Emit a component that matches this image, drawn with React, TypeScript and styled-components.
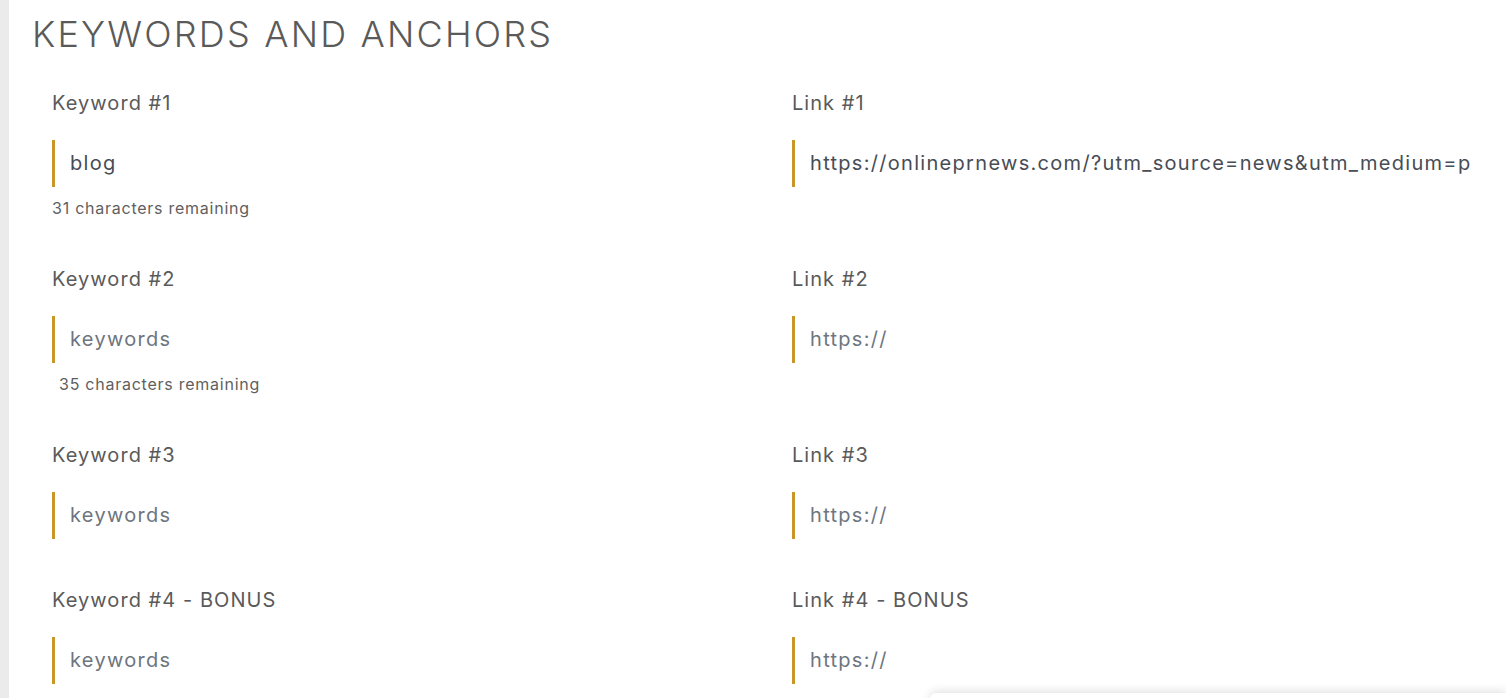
import React from "react";
import styled, { createGlobalStyle } from "styled-components";

const GlobalStyle = createGlobalStyle`
  html, body { margin: 0; padding: 0; background: #ffffff; }
  body { font-family: Inter, "Open Sans", "Liberation Sans", sans-serif; overflow: hidden; }
  * { box-sizing: border-box; }
`;

const Page = styled.div`
  display: flex;
  min-height: 698px;
`;

const Rail = styled.div`
  width: 9px;
  flex: 0 0 9px;
  background: #ebebeb;
`;

const Main = styled.main`
  flex: 1;
  padding: 9px 0 0 23px;
`;

const Title = styled.h2`
  margin: 0;
  font-size: 36px;
  line-height: 50px;
  font-weight: 300;
  color: #5a5a5a;
  letter-spacing: 2.2px;
`;

const Rows = styled.div`
  margin: 32px 0 0 20px;
  display: flex;
  flex-direction: column;
  gap: 49px;
`;

const Row = styled.div`
  display: grid;
  grid-template-columns: 740px 1fr;
`;

const Field = styled.div`
  display: flex;
  flex-direction: column;
  min-width: 0;
`;

const Label = styled.label`
  font-size: 20px;
  line-height: 24px;
  font-weight: 400;
  color: #5a5a5a;
  letter-spacing: 1.05px;
`;

const Input = styled.input`
  margin-top: 25px;
  height: 47px;
  width: 100%;
  border: none;
  border-left: 3px solid #c9962a;
  padding: 0 36px 2px 15px;
  font-family: inherit;
  font-size: 20px;
  letter-spacing: 1.3px;
  color: #474c55;
  background: transparent;
  outline: none;
  &::placeholder { color: #6d7580; opacity: 1; }
`;

const Hint = styled.div<{ $indent?: boolean }>`
  margin-top: 11px;
  font-size: 16px;
  line-height: 20px;
  color: #5f5f5f;
  letter-spacing: 0.75px;
  padding-left: ${(p) => (p.$indent ? "7px" : "0")};
`;

const Overlay = styled.div`
  position: fixed;
  left: 930px;
  right: 0;
  top: 693px;
  height: 60px;
  background: #ffffff;
  border-top-left-radius: 6px;
  box-shadow: 0 -2px 10px rgba(0, 0, 0, 0.12);
`;

type RowData = {
  kw: string;
  link: string;
  kwValue?: string;
  linkValue?: string;
  hint?: string;
  indent?: boolean;
};

const rows: RowData[] = [
  {
    kw: "Keyword #1",
    link: "Link #1",
    kwValue: "blog",
    linkValue: "https://onlineprnews.com/?utm_source=news&utm_medium=press",
    hint: "31 characters remaining",
  },
  { kw: "Keyword #2", link: "Link #2", hint: "35 characters remaining", indent: true },
  { kw: "Keyword #3", link: "Link #3" },
  { kw: "Keyword #4 - BONUS", link: "Link #4 - BONUS" },
];

export default function App() {
  return (
    <>
      <GlobalStyle />
      <Page>
        <Rail />
        <Main>
          <Title>KEYWORDS AND ANCHORS</Title>
          <Rows>
            {rows.map((r) => (
              <Row key={r.kw}>
                <Field>
                  <Label>{r.kw}</Label>
                  <Input placeholder="keywords" defaultValue={r.kwValue} />
                  {r.hint && <Hint $indent={r.indent}>{r.hint}</Hint>}
                </Field>
                <Field>
                  <Label>{r.link}</Label>
                  <Input placeholder="https://" defaultValue={r.linkValue} />
                </Field>
              </Row>
            ))}
          </Rows>
        </Main>
      </Page>
      <Overlay />
    </>
  );
}
